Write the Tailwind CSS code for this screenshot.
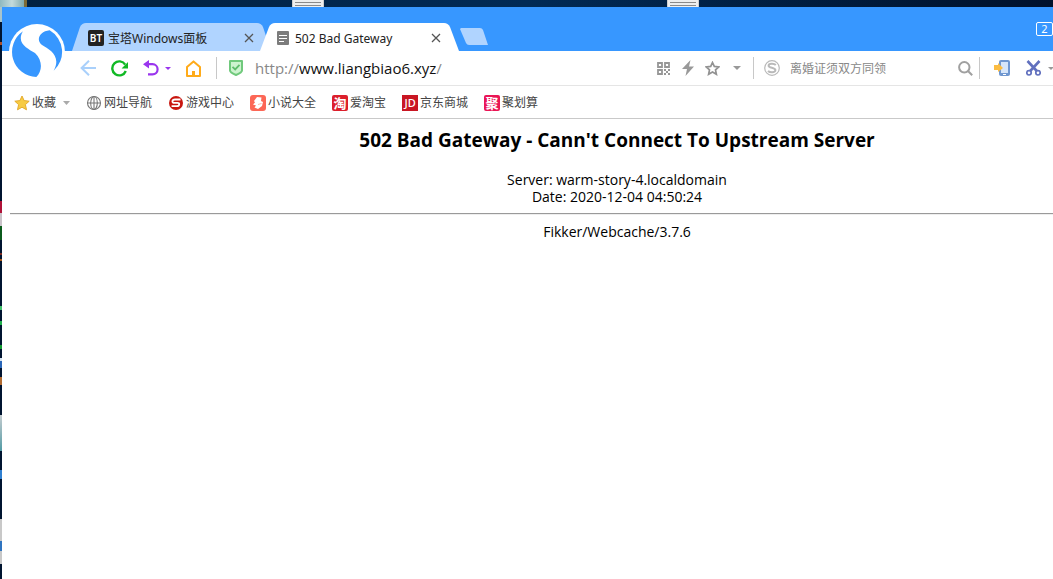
<!DOCTYPE html>
<html lang="zh-CN">
<head>
  <meta charset="UTF-8" />
  <title>502 Bad Gateway</title>
  <script src="https://cdn.jsdelivr.net/npm/@tailwindcss/browser@4"></script>
</head>
<body class="bg-[#001430] min-h-screen flex flex-col overflow-hidden font-['Noto_Sans','Noto_Sans_CJK_SC',sans-serif] text-black">

  <!-- Desktop strip above the window -->
  <div class="h-[7px] flex bg-linear-to-r from-[#01203f] via-[#012a55] to-[#00112b]">
    <div class="w-6 bg-linear-to-r from-[#8fb9c0] via-[#c3dadb] to-[#7fa9ac]"></div>
    <div class="w-[3px] bg-[#7d6a35]"></div>
    <div class="w-[32px] ml-[265px] bg-[#eeeeee] border-x border-[#cfcfcf] flex flex-col gap-[2px] pt-[2px] px-[2px]">
      <div class="h-px bg-[#8a8a8a]"></div>
      <div class="h-px bg-[#8a8a8a]"></div>
    </div>
    <div class="w-[32px] ml-[343px] bg-[#eeeeee] border-x border-[#cfcfcf] flex flex-col gap-[2px] pt-[2px] px-[2px]">
      <div class="h-px bg-[#8a8a8a]"></div>
      <div class="h-px bg-[#8a8a8a]"></div>
    </div>
  </div>

  <div class="flex flex-1">
    <!-- Desktop icons peeking out on the left -->
    <div class="w-[2px] shrink-0 flex flex-col">
      <div class="h-[15px] bg-[#a9c4cb]"></div>
      <div class="h-[20px]"></div>
      <div class="h-[3px] bg-[#b0502a]"></div>
      <div class="h-[156px]"></div>
      <div class="h-[12px] bg-[#b01238]"></div>
      <div class="h-[13px] bg-[#c9c2c8]"></div>
      <div class="h-[14px] bg-[#0b5a1c]"></div>
      <div class="h-[13px]"></div>
      <div class="h-[2px] bg-[#7a2a20]"></div>
      <div class="h-[4px]"></div>
      <div class="h-[2px] bg-[#a85a1c]"></div>
      <div class="h-[45px]"></div>
      <div class="h-[4px] bg-[#3fbf6a]"></div>
      <div class="h-[11px]"></div>
      <div class="h-[4px] bg-[#1fae4a]"></div>
      <div class="h-[20px]"></div>
      <div class="h-[4px] bg-[#109a30]"></div>
      <div class="h-[9px]"></div>
      <div class="h-[3px] bg-[#d5e4f2]"></div>
      <div class="h-[7px] bg-[#2a66b8]"></div>
      <div class="h-[9px]"></div>
      <div class="h-[8px] bg-[#b06a30]"></div>
      <div class="h-[30px]"></div>
      <div class="h-[36px] bg-linear-to-b from-[#c4ccd0] to-[#4f9aa4]"></div>
      <div class="h-[19px]"></div>
      <div class="h-[9px] bg-[#2f7fd0]"></div>
      <div class="h-[40px]"></div>
      <div class="h-[22px] bg-[#c8c8c8]"></div>
      <div class="h-[10px] bg-[#2f74c0]"></div>
      <div class="h-[13px] bg-[#c8c8c8]"></div>
    </div>

    <div class="relative flex-1 min-w-0 flex flex-col bg-white">
      <!-- Browser logo, lies over the tab strip and the toolbar -->
      <svg class="absolute left-[7px] top-[17px] w-14 h-14 z-10" viewBox="26 66 168 168" role="img" aria-label="搜狗浏览器">
        <circle cx="110" cy="150" r="84" fill="#fff" />
        <path d="M148 85C118 88 106 114 124 128C148 142 184 162 160 206A75 75 0 0 0 148 85Z" fill="#3797ff" />
        <path d="M68 88A75 75 0 0 0 108 225C126 208 128 176 104 153C84 140 46 124 68 88Z" fill="#3797ff" />
      </svg>

      <!-- Tab strip -->
      <header class="h-11 bg-[#3797ff] flex items-end pl-[70px]">
        <div class="relative isolate w-[199px] h-7 flex items-center gap-1 pt-[2px] pl-4 pr-[17px] text-xs text-[#222]">
          <svg class="absolute inset-0 -z-10 w-full h-full" viewBox="0 0 199 28" preserveAspectRatio="none"><path d="M0 28L8 4Q10 0 14 0H185Q189 0 191 4L199 28Z" fill="#b0d4ff" /></svg>
          <span class="w-4 h-4 rounded-[2px] bg-[#222] text-white text-[10px] leading-4 text-center font-semibold">BT</span>
          <a href="#" class="mt-[2px]">宝塔Windows面板</a>
          <button class="ml-auto" aria-label="关闭"><svg class="w-[10px] h-[10px]" viewBox="0 0 10 10" stroke="#555" stroke-width="1.3"><path d="M1 1L9 9M9 1L1 9" /></svg></button>
        </div>
        <div class="relative isolate w-[199px] h-7 -ml-[11px] flex items-center gap-[6px] pt-[2px] pl-[17px] pr-[18px] text-xs text-[#222]">
          <svg class="absolute inset-0 -z-10 w-full h-full" viewBox="0 0 199 28" preserveAspectRatio="none"><path d="M0 28L9 4Q11 0 15 0H184Q188 0 190 4L199 28Z" fill="#fff" /></svg>
          <svg class="w-3 h-[14px]" viewBox="0 0 12 14"><rect width="12" height="14" rx="1" fill="#7c7c7c" /><path d="M2 4.5H10M2 7.5H10M2 10.5H7" stroke="#fff" /></svg>
          <a href="#" class="mt-[2px]">502 Bad Gateway</a>
          <button class="ml-auto" aria-label="关闭"><svg class="w-[10px] h-[10px]" viewBox="0 0 10 10" stroke="#555" stroke-width="1.3"><path d="M1 1L9 9M9 1L1 9" /></svg></button>
        </div>
        <button class="ml-px mb-[6px]" aria-label="新建标签"><svg class="w-7 h-[17px]" viewBox="0 0 28 17"><path d="M1 0H20Q22 0 23 2L28 17H9Q7 17 6 15L0 1Z" fill="#b0d4ff" /></svg></button>
        <button class="ml-auto mb-[15px] w-[17px] h-[14px] rounded-[2px] border border-white text-white text-[11px] leading-3">2</button>
      </header>

      <!-- Toolbar -->
      <div class="h-[35px] border-b border-[#e5e5e5] flex items-center pl-[78px]">
        <button aria-label="后退"><svg class="w-4 h-4" viewBox="0 0 16 16" fill="none" stroke="#a9d0fb" stroke-width="2"><path d="M16 8H1.5M9 .8L1.6 8L9 15.2" /></svg></button>
        <button class="ml-[15px]" aria-label="刷新"><svg class="w-[17px] h-[17px]" viewBox="0 0 17 17"><path d="M14.8 11A7 7 0 1 1 14.2 4.6" fill="none" stroke="#11b925" stroke-width="2.4" /><path d="M17 2V8.4H10.6Z" fill="#11b925" /></svg></button>
        <button class="ml-[15px]" aria-label="恢复"><svg class="w-4 h-4" viewBox="0 0 16 16"><path d="M4 4.2H9.5A5.1 5.1 0 0 1 9.5 14.4H5" fill="none" stroke="#9a35ee" stroke-width="2.2" /><path d="M0 4.2L6 0V8.4Z" fill="#9a35ee" /></svg></button>
        <button class="ml-[6px]" aria-label="更多"><svg class="w-[6px] h-[3px]" viewBox="0 0 6 3"><path d="M0 0H6L3 3Z" fill="#9a35ee" /></svg></button>
        <button class="ml-[14px]" aria-label="主页"><svg class="w-[17px] h-[17px]" viewBox="0 0 17 17" fill="none" stroke="#ffab1a" stroke-width="2"><path d="M2 7L8.5 1.4L15 7V16H2Z" stroke-linejoin="round" /><path d="M8.5 11V16" stroke-width="3" /></svg></button>
        <div class="ml-[14px] w-px h-[22px] bg-[#c8c8c8]"></div>
        <svg class="ml-3 w-[14px] h-4" viewBox="0 0 14 16"><path d="M1 1H13V10.5Q13 12.5 7 15Q1 12.5 1 10.5Z" fill="#cdf3cf" stroke="#70c97c" stroke-width="2" stroke-linejoin="round" /><path d="M3.5 6.8L6.2 9.4L10.5 4.8" fill="none" stroke="#5fbd6c" stroke-width="1.8" /></svg>
        <label class="ml-3 flex-1 min-w-0 flex items-center font-['Open_Sans',sans-serif] text-[15px] leading-5 text-[#888]">
          <span>http://</span><input class="field-sizing-content min-w-0 text-[#111] outline-none" type="text" value="www.liangbiao6.xyz" aria-label="地址" /><span>/</span>
        </label>
        <button aria-label="二维码"><svg class="w-[13px] h-[13px]" viewBox="0 0 13 13" fill="none" stroke="#979797" stroke-width="1.8"><path d="M1 1H5V5H1ZM8 1H12V5H8ZM1 8H5V12H1Z" /><path d="M7 8H9M11 8H13M9 10H11M7 12H9M11 12H13" /></svg></button>
        <button class="ml-3" aria-label="加速"><svg class="w-3 h-4" viewBox="0 0 12 16"><path d="M8.5 0L0 9H5L3.5 16L12 6.5H7Z" fill="#999" /></svg></button>
        <button class="ml-[11px]" aria-label="收藏此页"><svg class="w-[15px] h-[15px]" viewBox="0 0 15 15"><path d="M7.5 1.5L9.3 5.4L13.8 5.9L10.5 8.9L11.4 13.3L7.5 11.1L3.6 13.3L4.5 8.9L1.2 5.9L5.7 5.4Z" fill="none" stroke="#929292" stroke-width="1.7" /></svg></button>
        <button class="ml-[13px]" aria-label="更多"><svg class="w-2 h-1" viewBox="0 0 8 4"><path d="M0 0H8L4 4Z" fill="#999" /></svg></button>
        <div class="ml-3 w-px h-[22px] bg-[#c8c8c8]"></div>
        <svg class="ml-[10px] w-4 h-4" viewBox="0 0 16 16" fill="none" stroke="#b9b9b9"><circle cx="8" cy="8" r="7.3" stroke-width="1.2" /><path d="M11.8 5C10 3.2 4.6 3.2 4.6 5.7C4.6 8.3 11.6 7.2 11.4 10.2C11.2 12.8 5.8 12.6 4 10.9" stroke-width="2" /></svg>
        <input class="ml-[10px] pt-[2px] w-[168px] text-xs text-[#888] placeholder:text-[#888] outline-none" type="text" placeholder="离婚证须双方同领" aria-label="搜索" />
        <button aria-label="搜索"><svg class="w-[15px] h-[15px]" viewBox="0 0 15 15" fill="none" stroke="#a0a0a0" stroke-width="2"><circle cx="6.3" cy="6.3" r="5.2" /><path d="M10 10L14.2 14.2" /></svg></button>
        <div class="ml-[6px] w-px h-[22px] bg-[#c8c8c8]"></div>
        <button class="ml-[14px]" aria-label="发送到手机"><svg class="w-4 h-4" viewBox="0 0 16 16"><rect x="5" width="11" height="16" rx="2" fill="#6f97d0" /><path d="M7 2H14V13H7Z" fill="#d6e6fa" /><path d="M9 14.5H12" stroke="#fff" /><path d="M0 5H4V3L9 8L4 12V10H0Z" fill="#fbbc42" /></svg></button>
        <button class="ml-4" aria-label="截图"><svg class="w-[15px] h-4" viewBox="0 0 15 16" fill="none" stroke="#6170be"><path d="M1.5 1L10.8 11M13.5 1L4.2 11" stroke-width="2.6" /><circle cx="3" cy="12.8" r="2.2" stroke-width="1.7" /><circle cx="12" cy="12.8" r="2.2" stroke-width="1.7" /></svg></button>
        <button class="ml-[7px]" aria-label="更多"><svg class="w-[5px] h-[3px]" viewBox="0 0 5 3"><path d="M0 0H5V1L3 3Z" fill="#999" /></svg></button>
      </div>

      <!-- Bookmarks -->
      <nav class="h-[33px] border-b border-[#c9c9c9] flex items-center gap-4 pt-px pl-3 text-xs text-[#444] whitespace-nowrap">
        <a href="#" class="flex items-center gap-[2px]">
          <svg class="w-4 h-4" viewBox="0 0 16 16"><path d="M8 1L10.1 5.6L15.2 6.2L11.4 9.6L12.5 14.8L8 12.2L3.5 14.8L4.6 9.6L.8 6.2L5.9 5.6Z" fill="#f7cb43" stroke="#e5ac2f" /></svg>
          收藏
          <svg class="ml-[5px] w-[7px] h-1" viewBox="0 0 7 4"><path d="M0 0H7L3.5 4Z" fill="#aaa" /></svg>
        </a>
        <a href="#" class="flex items-center gap-[2px]">
          <svg class="w-4 h-4" viewBox="0 0 16 16" fill="none" stroke="#777" stroke-width="1.1"><circle cx="8" cy="8" r="6.5" /><ellipse cx="8" cy="8" rx="3.3" ry="6.5" /><path d="M8 1.5V14.5M1.5 8H14.5" /></svg>
          网址导航
        </a>
        <a href="#" class="flex items-center gap-[2px]">
          <svg class="w-4 h-4" viewBox="0 0 16 16"><circle cx="8" cy="8" r="7" fill="#c8160f" /><path d="M12.5 4.5H7Q4.6 4.5 4.4 6.3Q4.3 7.8 6.4 7.8H9.6Q11.4 7.9 11.2 9.4Q11 11.2 9 11.2H3.6" fill="none" stroke="#fff" stroke-width="1.8" /></svg>
          游戏中心
        </a>
        <a href="#" class="flex items-center gap-[2px]">
          <svg class="w-4 h-4" viewBox="0 0 16 16"><rect width="16" height="16" rx="3" fill="#fc6756" /><path d="M7 2L11.5 2.5L11 6L13 7L12 11L8 14L4.5 12.5L6 10.5L3 9.5L5 7.5L4 6Z" fill="#fff" /><path d="M8 9.5L11.5 8.5" stroke="#ffb5a8" /></svg>
          小说大全
        </a>
        <a href="#" class="flex items-center gap-[2px]">
          <span class="w-4 h-4 rounded-[2px] bg-[#dc1f2c] text-white text-[13px] leading-4 text-center font-bold">淘</span>
          爱淘宝
        </a>
        <a href="#" class="flex items-center gap-[2px]">
          <span class="w-4 h-4 bg-[#c91623] text-white text-[11px] leading-4 text-center font-medium">JD</span>
          京东商城
        </a>
        <a href="#" class="flex items-center gap-[2px]">
          <span class="w-4 h-4 rounded-[2px] bg-[#ea1555] text-white text-[13px] leading-4 text-center font-bold">聚</span>
          聚划算
        </a>
      </nav>

      <!-- Error page -->
      <main class="pl-2 pt-[7px] text-center font-['Open_Sans',sans-serif] text-sm leading-[17px]">
        <div class="pl-[171px]">
          <h1 class="text-[19px] leading-7 font-bold">502 Bad Gateway - Cann't Connect To Upstream Server</h1>
          <p class="mt-[17px]">Server: warm-story-4.localdomain<br />Date: 2020-12-04 04:50:24</p>
        </div>
        <hr class="my-2 border-t border-b border-t-[#9a9a9a] border-b-[#eeeeee]" />
        <p class="pl-[171px]">Fikker/Webcache/3.7.6</p>
      </main>
    </div>
  </div>

</body>
</html>
